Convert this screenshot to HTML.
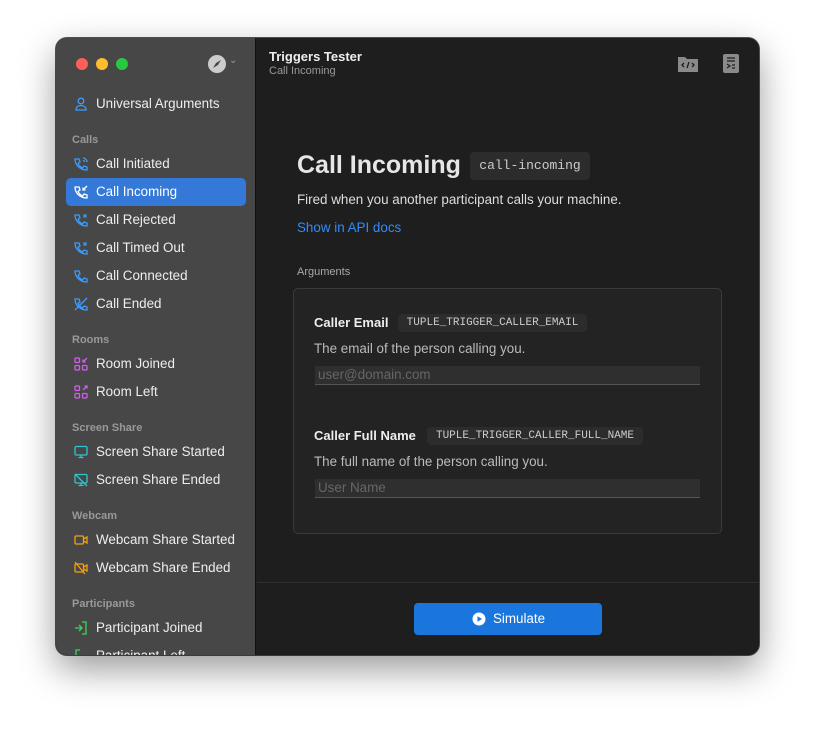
<!DOCTYPE html>
<html><head><style>
*{margin:0;padding:0;box-sizing:border-box}
body{width:815px;height:729px;background:#fff;font-family:"Liberation Sans",sans-serif;position:relative;overflow:hidden}
.win{position:absolute;left:56px;top:38px;width:703px;height:617px;border-radius:11px;overflow:hidden;background:#1e1e1e;box-shadow:0 14px 36px rgba(0,0,0,.4),0 0 0 1px #555}
.side{position:absolute;left:0;top:0;width:200px;height:617px;background:#474747;border-right:1px solid #111}
.abs{position:absolute}
.dot{position:absolute;top:20px;width:12px;height:12px;border-radius:50%}
.it{position:absolute;left:10px;width:180px;height:28px;border-radius:5px;color:#eee;font-size:13.4px;line-height:28px;padding-left:30px}
.it svg{position:absolute;left:8px;top:7px}
.hd{position:absolute;left:16px;color:#999;font-size:11px;font-weight:bold}
.main{position:absolute;left:201px;top:0;right:0;bottom:0;background:#1e1e1e}
.code{font-family:"Liberation Mono",monospace;background:#2c2c2c;color:#ccc;border-radius:4px;position:absolute}
.inp{position:absolute;background:#2f2f2f;border-bottom:1px solid #555;color:#666;font-size:13.4px;line-height:18px;padding-left:3px}
</style></head><body>
<div class="win">
<div class="side">
<div class="dot" style="left:20px;background:#fe5f57"></div>
<div class="dot" style="left:40px;background:#febc2e"></div>
<div class="dot" style="left:60px;background:#28c840"></div>
<svg class="abs" style="left:151px;top:16px" width="20" height="20" viewBox="0 0 20 20"><circle cx="10" cy="10" r="9" fill="#ccc"/><path d="M14 6 L11 11 L6 14 L9 9Z" fill="#464646"/></svg>
<div class="abs" style="left:173px;top:17px;color:#999;font-size:10px">⌄</div>
<div class="it" style="top:52px"><svg width="14" height="14" viewBox="0 0 14 14" fill="none" stroke="#3b9cff" stroke-width="1.3"><circle cx="7" cy="4" r="2.8"/><path d="M2 13c0-3 2-4.5 5-4.5s5 1.5 5 4.5z"/></svg>Universal Arguments</div>
<div class="hd" style="top:96px">Calls</div>
<div class="it" style="top:112px"><svg width="14" height="14" viewBox="0 0 14 14" fill="none" stroke="#3b9cff" stroke-width="1.3"><path d="M2 2l3 0 1 3-2 1.5c1 2 2.5 3.5 4.5 4.5L10 9l3 1v3C6 13 1 8 1 2z"/><path d="M9 1a4 4 0 014 4M9 3.5a1.5 1.5 0 011.5 1.5"/></svg>Call Initiated</div>
<div class="it" style="top:140px;background:#3478d8;color:#fff"><svg width="14" height="14" viewBox="0 0 14 14" fill="none" stroke="#fff" stroke-width="1.3"><path d="M2 2l3 0 1 3-2 1.5c1 2 2.5 3.5 4.5 4.5L10 9l3 1v3C6 13 1 8 1 2z"/><path d="M13 1L9 5M9 2.5V5h2.5"/></svg>Call Incoming</div>
<div class="it" style="top:168px"><svg width="14" height="14" viewBox="0 0 14 14" fill="none" stroke="#3b9cff" stroke-width="1.3"><path d="M2 2l3 0 1 3-2 1.5c1 2 2.5 3.5 4.5 4.5L10 9l3 1v3C6 13 1 8 1 2z"/><path d="M9.5 1.5l3 3M12.5 1.5l-3 3"/></svg>Call Rejected</div>
<div class="it" style="top:196px"><svg width="14" height="14" viewBox="0 0 14 14" fill="none" stroke="#3b9cff" stroke-width="1.3"><path d="M2 2l3 0 1 3-2 1.5c1 2 2.5 3.5 4.5 4.5L10 9l3 1v3C6 13 1 8 1 2z"/><path d="M9.5 1.5l3 3M12.5 1.5l-3 3"/></svg>Call Timed Out</div>
<div class="it" style="top:224px"><svg width="14" height="14" viewBox="0 0 14 14" fill="none" stroke="#3b9cff" stroke-width="1.3"><path d="M2 2l3 0 1 3-2 1.5c1 2 2.5 3.5 4.5 4.5L10 9l3 1v3C6 13 1 8 1 2z"/></svg>Call Connected</div>
<div class="it" style="top:252px"><svg width="14" height="14" viewBox="0 0 14 14" fill="none" stroke="#3b9cff" stroke-width="1.3"><path d="M2 2l3 0 1 3-2 1.5c1 2 2.5 3.5 4.5 4.5L10 9l3 1v3C6 13 1 8 1 2z"/><path d="M1 13L13 1"/></svg>Call Ended</div>
<div class="hd" style="top:296px">Rooms</div>
<div class="it" style="top:312px"><svg width="14" height="14" viewBox="0 0 14 14" fill="none" stroke="#d35cf0" stroke-width="1.3"><rect x="1" y="1" width="4.5" height="4.5" rx="1"/><rect x="1" y="8.5" width="4.5" height="4.5" rx="1"/><rect x="8.5" y="8.5" width="4.5" height="4.5" rx="1"/><path d="M13 1L9 5M9 2.5V5h2.5"/></svg>Room Joined</div>
<div class="it" style="top:340px"><svg width="14" height="14" viewBox="0 0 14 14" fill="none" stroke="#d35cf0" stroke-width="1.3"><rect x="1" y="1" width="4.5" height="4.5" rx="1"/><rect x="1" y="8.5" width="4.5" height="4.5" rx="1"/><rect x="8.5" y="8.5" width="4.5" height="4.5" rx="1"/><path d="M9 5L13 1M10.5 1H13v2.5"/></svg>Room Left</div>
<div class="hd" style="top:384px">Screen Share</div>
<div class="it" style="top:400px"><svg width="14" height="14" viewBox="0 0 14 14" fill="none" stroke="#2ec4d0" stroke-width="1.3"><rect x="1" y="1.5" width="12" height="8.5" rx="1.2"/><path d="M7 10v2.5M4.5 12.5h5"/></svg>Screen Share Started</div>
<div class="it" style="top:428px"><svg width="14" height="14" viewBox="0 0 14 14" fill="none" stroke="#2ec4d0" stroke-width="1.3"><rect x="1" y="1.5" width="12" height="8.5" rx="1.2"/><path d="M7 10v2.5M4.5 12.5h5M1 1l12 12"/></svg>Screen Share Ended</div>
<div class="hd" style="top:472px">Webcam</div>
<div class="it" style="top:488px"><svg width="14" height="14" viewBox="0 0 14 14" fill="none" stroke="#f5a00f" stroke-width="1.3"><rect x="1" y="3" width="8.5" height="8" rx="1.2"/><path d="M9.5 6l3.5-2v6l-3.5-2"/></svg>Webcam Share Started</div>
<div class="it" style="top:516px"><svg width="14" height="14" viewBox="0 0 14 14" fill="none" stroke="#f5a00f" stroke-width="1.3"><rect x="1" y="3" width="8.5" height="8" rx="1.2"/><path d="M9.5 6l3.5-2v6l-3.5-2M1 1l10 12"/></svg>Webcam Share Ended</div>
<div class="hd" style="top:560px">Participants</div>
<div class="it" style="top:576px"><svg width="14" height="14" viewBox="0 0 14 14" fill="none" stroke="#3fd35b" stroke-width="1.3"><path d="M8 1h4v12H8M1 7h7M5 4l3 3-3 3"/></svg>Participant Joined</div>
<div class="it" style="top:604px"><svg width="14" height="14" viewBox="0 0 14 14" fill="none" stroke="#3fd35b" stroke-width="1.3"><path d="M6 1H2v12h4M5 7h8"/></svg>Participant Left</div>
</div>
<div class="main">
<div class="abs" style="left:12px;top:11px;color:#eee;font-size:13px;font-weight:bold">Triggers Tester</div>
<div class="abs" style="left:12px;top:27px;color:#999;font-size:11px">Call Incoming</div>
<svg class="abs" style="left:420px;top:16px" width="22" height="20" viewBox="0 0 22 20"><path d="M1 3h7l2 2h11v13H1z" fill="#8a8a8a"/><path d="M7 9l-2 2 2 2M15 9l2 2-2 2M12 8l-2 6" stroke="#1e1e1e" stroke-width="1.3" fill="none"/></svg>
<svg class="abs" style="left:466px;top:16px" width="16" height="20" viewBox="0 0 16 20"><rect x="0" y="0" width="16" height="19" rx="2" fill="#8a8a8a"/><path d="M4 4h8M4 7h8M4 10l3 2-3 2M9 11h3M9 14h3" stroke="#1e1e1e" stroke-width="1.2" fill="none"/></svg>
<div class="abs" style="left:40px;top:113px;color:#e6e6e6;font-size:25px;font-weight:bold">Call Incoming</div>
<div class="code" style="left:213px;top:114px;width:120px;height:28px;font-size:13px;line-height:28px;text-align:center">call‑incoming</div>
<div class="abs" style="left:40px;top:154px;color:#ddd;font-size:13.4px">Fired when you another participant calls your machine.</div>
<div class="abs" style="left:40px;top:182px;color:#2f8cff;font-size:13.4px">Show in API docs</div>
<div class="abs" style="left:40px;top:228px;color:#aaa;font-size:11px">Arguments</div>
<div class="abs" style="left:36px;top:250px;width:429px;height:246px;background:#232323;border:1px solid #3a3a3a;border-radius:5px"></div>
<div class="abs" style="left:57px;top:277px;color:#eee;font-size:13px;font-weight:bold">Caller Email</div>
<div class="code" style="left:141px;top:276px;width:189px;height:18px;font-size:11px;line-height:18px;text-align:center">TUPLE_TRIGGER_CALLER_EMAIL</div>
<div class="abs" style="left:57px;top:303px;color:#bbb;font-size:13.4px">The email of the person calling you.</div>
<div class="inp" style="left:58px;top:328px;width:385px;height:19px">user@domain.com</div>
<div class="abs" style="left:57px;top:390px;color:#eee;font-size:13px;font-weight:bold">Caller Full Name</div>
<div class="code" style="left:170px;top:389px;width:216px;height:18px;font-size:11px;line-height:18px;text-align:center">TUPLE_TRIGGER_CALLER_FULL_NAME</div>
<div class="abs" style="left:57px;top:416px;color:#bbb;font-size:13.4px">The full name of the person calling you.</div>
<div class="inp" style="left:58px;top:441px;width:385px;height:19px">User Name</div>
<div class="abs" style="left:0;top:544px;width:502px;height:1px;background:#2e2e2e"></div>
<div class="abs" style="left:157px;top:565px;width:188px;height:32px;background:#1a76dc;border-radius:4px;color:#fff;font-size:13.4px;line-height:32px;text-align:center;padding-left:22px">Simulate</div>
<svg class="abs" style="left:215px;top:574px" width="14" height="14" viewBox="0 0 14 14"><circle cx="7" cy="7" r="6.5" fill="#fff"/><path d="M5.5 4.2v5.6L10 7z" fill="#1a76dc"/></svg>
</div>
</div>
</body></html>
